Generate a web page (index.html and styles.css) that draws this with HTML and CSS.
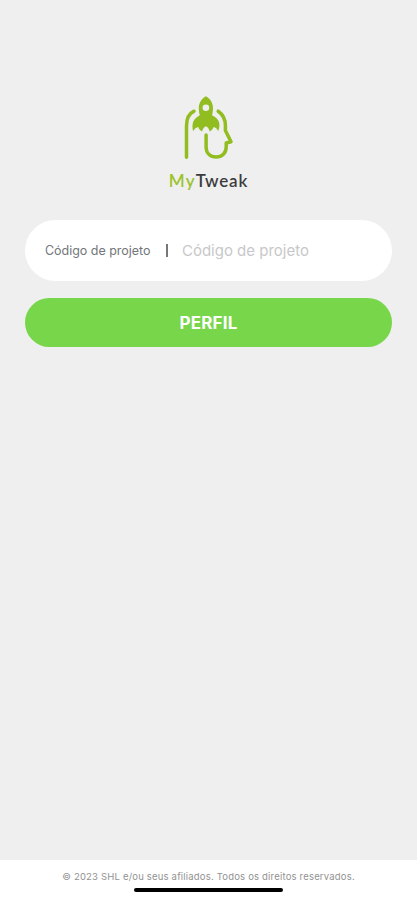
FILE: index.html
```html
<!DOCTYPE html>
<html lang="pt">
<head>
<meta charset="utf-8">
<meta name="viewport" content="width=device-width, initial-scale=1">
<title>MyTweak</title>
<link rel="stylesheet" href="styles.css">
</head>
<body>
<main class="content">
  <div class="brand">
    <svg class="brand-mark" viewBox="180.8 94 56 66" aria-hidden="true">
      <g class="head">
        <path d="M186.3 157.3V126C186.3 118.5 189 113.5 193.8 111.2"/>
        <path d="M218 111.2C223.5 115 225.2 120.5 225.2 125.5V130.5L230.8 141.8L226 143V147C226 153 221.8 156.9 216 156.9C210 156.9 205.9 153 205.9 147V135"/>
      </g>
      <path class="rocket" fill-rule="evenodd" d="M205.7 96.2C210.3 98.8 212.8 103.2 212.8 108C212.8 110.8 212.3 113.2 211.8 115.3C216.8 117.8 219.3 121 219.2 125C219.2 127.3 218.7 129.2 217.9 131.2C216.9 128.8 215.4 127.4 213.4 127C212.6 129.2 211.3 130.7 209.5 131.6C209 128.8 207.6 127 205.7 126.2C203.8 127 202.4 128.8 201.9 131.6C200.1 130.7 198.8 129.2 198 127C196 127.4 194.3 128.8 193 131.2C192.4 129.2 192.2 127.3 192.3 125C192.5 121 195 117.8 199.6 115.3C199.1 113.2 198.6 110.8 198.6 108C198.6 103.2 201.1 98.8 205.7 96.2ZM205.7 104.4A3.3 3.3 0 1 0 205.7 111A3.3 3.3 0 1 0 205.7 104.4Z"/>
    </svg>
    <div class="brand-name"><span class="brand-my">My</span>Tweak</div>
  </div>
  <div class="field">
    <span class="field-label">Código de projeto</span>
    <span class="divider"></span>
    <span class="placeholder">Código de projeto</span>
  </div>
  <div class="button">PERFIL</div>
</main>
<footer class="footer">
  <div class="copyright">© 2023 SHL e/ou seus afiliados. Todos os direitos reservados.</div>
  <div class="home-bar"></div>
</footer>
</body>
</html>
```
FILE: styles.css
```css
* { box-sizing: border-box; }
body {
  margin: 0;
  height: 900px;
  display: flex;
  flex-direction: column;
  overflow: hidden;
  background: #efefef;
  font-family: Inter, "Liberation Sans", sans-serif;
  white-space: nowrap;
}
.content { flex: 1; padding: 94px 25px 0; }
.brand {
  height: 126px;
  display: flex;
  flex-direction: column;
  align-items: center;
}
.brand-mark { width: 56px; height: 66px; display: block; }
.head {
  fill: none;
  stroke: #91bd20;
  stroke-width: 3.5;
  stroke-linecap: round;
  stroke-linejoin: round;
}
.rocket { fill: #91bd20; }
.brand-name {
  margin-top: 10px;
  font: 600 17px/22px Lato, sans-serif;
  letter-spacing: 0.8px;
  color: #3c3c3e;
}
.brand-my { color: #9bc32c; letter-spacing: 1.1px; }
.field {
  height: 61px;
  padding: 0 20px;
  display: flex;
  align-items: center;
  border-radius: 31px;
  background: #fff;
}
.field-label {
  width: 121px;
  font-size: 12.5px;
  letter-spacing: -0.02px;
  color: #73767a;
}
.divider { width: 1.5px; height: 13px; background: #77777a; }
.placeholder {
  margin-left: 14.5px;
  font-size: 15px;
  letter-spacing: -0.01px;
  color: #c8c8c9;
}
.button {
  height: 48.5px;
  margin-top: 17px;
  border-radius: 25px;
  background: #77d649;
  color: #fff;
  font-size: 17px;
  letter-spacing: 0.2px;
  font-weight: 700;
  line-height: 51px;
  text-align: center;
}
.footer {
  height: 40px;
  padding-top: 10px;
  background: #fff;
  display: flex;
  flex-direction: column;
  align-items: center;
}
.copyright {
  font-size: 9.5px;
  line-height: 14px;
  letter-spacing: 0.19px;
  color: #929292;
}
.home-bar {
  width: 149px;
  height: 4px;
  margin-top: 4px;
  border-radius: 2px;
  background: #000;
}
```
